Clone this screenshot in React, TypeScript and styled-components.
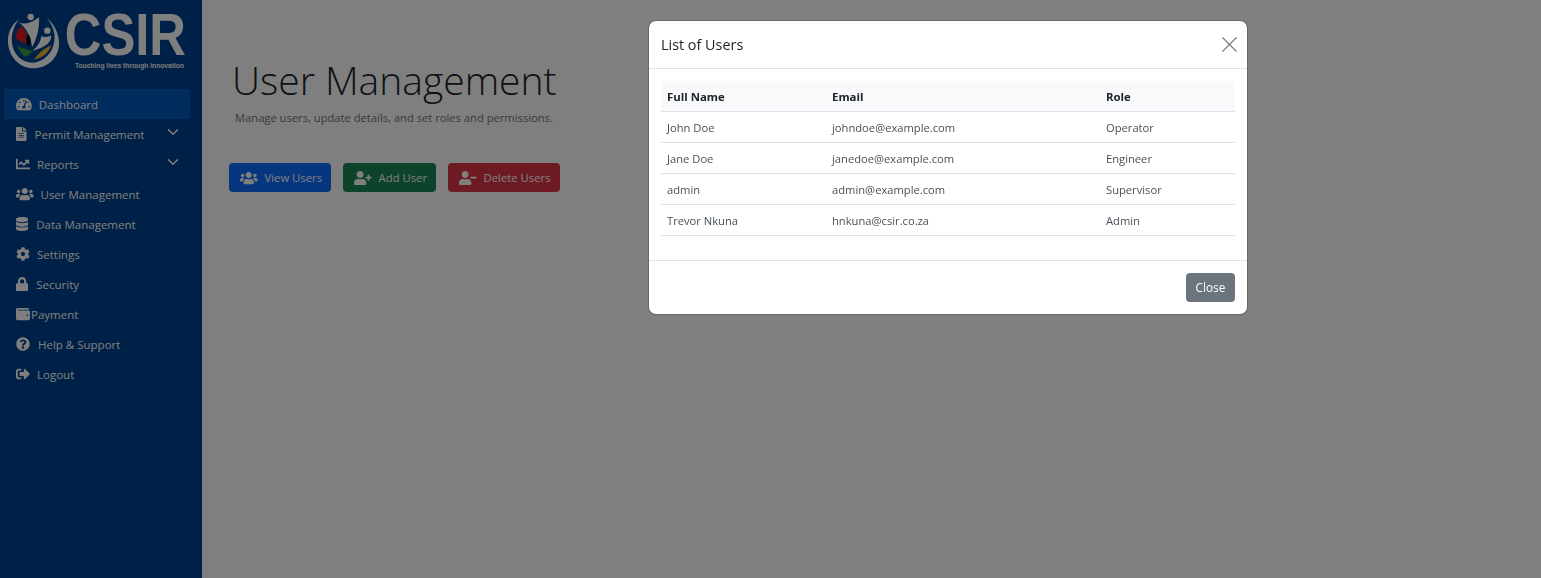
import * as React from 'react';
import styled, { createGlobalStyle } from 'styled-components';
import {
  FaChartLine,
  FaCog,
  FaDatabase,
  FaFileAlt,
  FaLock,
  FaQuestionCircle,
  FaSignOutAlt,
  FaTachometerAlt,
  FaUserMinus,
  FaUserPlus,
  FaUsers,
  FaWallet,
} from 'react-icons/fa';
import { ChevronDown, X } from 'lucide-react';

const FONT = `'Open Sans', 'Noto Sans', 'Liberation Sans', sans-serif`;

const GlobalStyle = createGlobalStyle`
  html, body {
    margin: 0;
    padding: 0;
    height: 100%;
    background: #fff;
    font-family: ${FONT};
  }
  * {
    box-sizing: border-box;
  }
`;

const Page = styled('div')`
  display: flex;
  width: 100%;
  height: 578px;
  overflow: hidden;
`;

const Sidebar = styled('aside')`
  width: 202px;
  flex: none;
  background: #00428e;
  padding: 0 12px 0 4px;
`;

const Brand = styled('div')`
  display: flex;
  align-items: flex-start;
  height: 89px;
  padding-top: 8px;
`;

const BrandText = styled('div')`
  display: flex;
  flex-direction: column;
  align-items: flex-end;
  width: 120px;
  margin-top: 1px;
`;

const BrandName = styled('span')`
  font-family: 'Liberation Sans', sans-serif;
  font-weight: 700;
  font-size: 59px;
  line-height: 52px;
  height: 52px;
  color: #fff;
  transform: scaleX(0.86);
  transform-origin: right center;
`;

const BrandTag = styled('span')`
  font-family: 'Liberation Sans', sans-serif;
  font-weight: 700;
  font-size: 6.7px;
  line-height: 8px;
  margin: 1px 2px 0 0;
  color: #f2f2f2;
  white-space: nowrap;
`;

const Nav = styled('nav')`
  display: flex;
  flex-direction: column;
`;

const NavItem = styled('a')<{ $active?: boolean; $gap: number; $iconWidth: number }>`
  display: flex;
  align-items: center;
  height: 30px;
  padding-left: 12px;
  font-size: 11.5px;
  color: #fff;
  background: ${(p) => (p.$active ? '#0059bd' : 'transparent')};
  svg.icon {
    height: 14px;
    width: ${(p) => p.$iconWidth}px;
    flex: none;
    margin-right: ${(p) => p.$gap}px;
  }
`;

const Caret = styled(ChevronDown)`
  width: 18px;
  height: 18px;
  margin-left: auto;
  margin-right: 8px;
  margin-top: -5px;
  stroke-width: 2;
`;

const Main = styled('main')`
  flex: 1;
  padding: 56px 0 0 27px;
`;

const Title = styled('h1')`
  margin: 0 0 0 3px;
  font-size: 39px;
  font-weight: 300;
  line-height: 48px;
  color: #212529;
`;

const Subtitle = styled('p')`
  margin: 6px 0 0 6px;
  font-size: 11.2px;
  line-height: 16px;
  color: #6c757d;
`;

const ActionRow = styled('div')`
  display: flex;
  gap: 12px;
  margin-top: 37px;
`;

const ActionButton = styled('button')<{ $bg: string }>`
  display: flex;
  align-items: center;
  height: 29px;
  padding: 0 9px 0 11px;
  border: 0;
  border-radius: 4px;
  font-family: ${FONT};
  font-size: 11.3px;
  color: #fff;
  background: ${(p) => p.$bg};
  svg {
    height: 14px;
    width: 17.5px;
    margin-right: 7px;
  }
`;

const Backdrop = styled('div')`
  position: fixed;
  inset: 0;
  background: rgba(0, 0, 0, 0.5);
`;

const Modal = styled('section')`
  position: absolute;
  left: 648px;
  top: 20px;
  width: 600px;
  background: #fff;
  background-clip: padding-box;
  border: 1px solid rgba(0, 0, 0, 0.175);
  border-radius: 8px;
  color: #212529;
`;

const ModalHeader = styled('header')`
  display: flex;
  align-items: center;
  justify-content: space-between;
  height: 48px;
  padding: 0 4px 0 12px;
  border-bottom: 1px solid #dee2e6;
`;

const ModalTitle = styled('h5')`
  margin: 0;
  font-size: 14.4px;
  font-weight: 400;
`;

const CloseIcon = styled(X)`
  width: 27px;
  height: 27px;
  color: #777;
  stroke-width: 1;
`;

const ModalBody = styled('div')`
  padding: 12px 12px 24px;
  border-bottom: 1px solid #dee2e6;
`;

const UsersTable = styled('table')`
  width: 100%;
  border-collapse: collapse;
  table-layout: fixed;
  font-size: 11.2px;
`;

const HeadCell = styled('th')`
  height: 30px;
  padding: 2px 6px 0;
  text-align: left;
  font-size: 11.4px;
  font-weight: 700;
  background: #f8f9fa;
  border-bottom: 1px solid #dee2e6;
`;

const Cell = styled('td')`
  height: 31px;
  padding: 2px 6px 0;
  color: #495057;
  border-bottom: 1px solid #dee2e6;
`;

const ModalFooter = styled('footer')`
  display: flex;
  justify-content: flex-end;
  padding: 12px;
`;

const CloseButton = styled('button')`
  width: 49px;
  height: 29px;
  border: 0;
  border-radius: 4px;
  background: #6c757d;
  color: #fff;
  font-family: ${FONT};
  font-size: 11.8px;
`;

const navItems = [
  { label: 'Dashboard', icon: FaTachometerAlt, width: 15.75, gap: 7, active: true },
  { label: 'Permit Management', icon: FaFileAlt, width: 10.5, gap: 8, caret: true },
  { label: 'Reports', icon: FaChartLine, width: 14, gap: 7, caret: true },
  { label: 'User Management', icon: FaUsers, width: 17.5, gap: 7 },
  { label: 'Data Management', icon: FaDatabase, width: 12.25, gap: 8 },
  { label: 'Settings', icon: FaCog, width: 14, gap: 7 },
  { label: 'Security', icon: FaLock, width: 12.25, gap: 8 },
  { label: 'Payment', icon: FaWallet, width: 14, gap: 1 },
  { label: 'Help & Support', icon: FaQuestionCircle, width: 14, gap: 8 },
  { label: 'Logout', icon: FaSignOutAlt, width: 14, gap: 7 },
];

const users = [
  { name: 'John Doe', email: 'johndoe@example.com', role: 'Operator' },
  { name: 'Jane Doe', email: 'janedoe@example.com', role: 'Engineer' },
  { name: 'admin', email: 'admin@example.com', role: 'Supervisor' },
  { name: 'Trevor Nkuna', email: 'hnkuna@csir.co.za', role: 'Admin' },
];

const Emblem = () => (
  <svg width="62" height="64" viewBox="0 0 186 192">
    <path
      d="M46 34 C20 50 10 80 12 105 C16 150 50 182 90 181 C135 180 168 145 165 100 C163 72 150 48 128 30 C145 50 155 75 151 100 C146 135 120 162 88 164 C55 165 28 140 24 105 C21 78 30 52 46 34Z"
      fill="#fff"
    />
    <circle cx="80" cy="27" r="9.5" fill="#fff" />
    <circle cx="130" cy="68" r="9.5" fill="#fff" />
    <path
      d="M44 42 C58 50 76 46 86 40 C92 37 98 33 105 28 C107 55 100 90 84 118 C82 92 70 62 44 42Z"
      fill="#fff"
    />
    <path
      d="M112 84 C120 88 132 88 141 82 C144 100 128 118 86 128 C100 115 110 102 112 84Z"
      fill="#fff"
    />
    <path d="M33 90 C36 76 42 64 51 54 C60 62 66 70 68 78 L64 109Z" fill="#e01b24" />
    <path d="M73 79 C80 88 84 100 73 116 C66 106 65 92 73 79Z" fill="#000" />
    <path d="M40 114 C55 122 72 124 86 129 C76 142 66 146 60 145 C52 136 44 126 40 114Z" fill="#2f9e44" />
    <path d="M90 155 C102 136 120 122 141 112 C136 130 122 148 90 155Z" fill="#f2b632" />
  </svg>
);

const App: React.FC = () => {
  return (
    <>
      <GlobalStyle />
      <Page>
        <Sidebar>
          <Brand>
            <Emblem />
            <BrandText>
              <BrandName>CSIR</BrandName>
              <BrandTag>Touching lives through innovation</BrandTag>
            </BrandText>
          </Brand>
          <Nav>
            {navItems.map((item) => {
              const Icon = item.icon;
              return (
                <NavItem key={item.label} $active={item.active} $gap={item.gap} $iconWidth={item.width}>
                  <Icon className="icon" />
                  {item.label}
                  {item.caret && <Caret />}
                </NavItem>
              );
            })}
          </Nav>
        </Sidebar>
        <Main>
          <Title>User Management</Title>
          <Subtitle>Manage users, update details, and set roles and permissions.</Subtitle>
          <ActionRow>
            <ActionButton $bg="#0d6efd">
              <FaUsers />
              View Users
            </ActionButton>
            <ActionButton $bg="#198754">
              <FaUserPlus />
              Add User
            </ActionButton>
            <ActionButton $bg="#dc3545">
              <FaUserMinus />
              Delete Users
            </ActionButton>
          </ActionRow>
        </Main>
      </Page>
      <Backdrop />
      <Modal>
        <ModalHeader>
          <ModalTitle>List of Users</ModalTitle>
          <CloseIcon />
        </ModalHeader>
        <ModalBody>
          <UsersTable>
            <colgroup>
              <col width="165" />
              <col width="274" />
              <col width="135" />
            </colgroup>
            <thead>
              <tr>
                <HeadCell>Full Name</HeadCell>
                <HeadCell>Email</HeadCell>
                <HeadCell>Role</HeadCell>
              </tr>
            </thead>
            <tbody>
              {users.map((user) => (
                <tr key={user.email}>
                  <Cell>{user.name}</Cell>
                  <Cell>{user.email}</Cell>
                  <Cell>{user.role}</Cell>
                </tr>
              ))}
            </tbody>
          </UsersTable>
        </ModalBody>
        <ModalFooter>
          <CloseButton>Close</CloseButton>
        </ModalFooter>
      </Modal>
    </>
  );
};

export default App;
